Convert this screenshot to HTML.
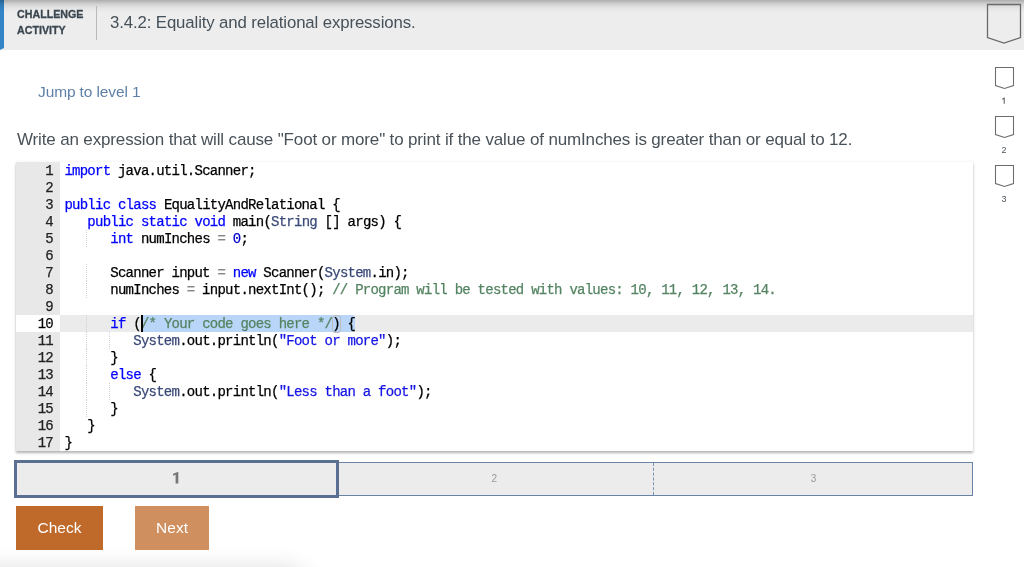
<!DOCTYPE html>
<html><head><meta charset="utf-8">
<style>
*{margin:0;padding:0;box-sizing:border-box}
html,body{width:1024px;height:567px;overflow:hidden;background:#fff;font-family:"Liberation Sans",sans-serif}
.abs{position:absolute}
#hdr{left:0;top:0;width:1024px;height:50px;background:#ededed}
#hdrshadow{left:0;top:0;width:1024px;height:13px;background:linear-gradient(rgba(0,0,0,0.27),rgba(0,0,0,0.11) 33%,rgba(0,0,0,0.03) 66%,rgba(0,0,0,0))}
#bluebar{left:0;top:0;width:4px;height:50px;background:#3485c8;clip-path:polygon(0 0,100% 0,100% 48px,0 50px)}
#chal{left:17px;top:5.5px;font-weight:bold;font-size:10.7px;line-height:16px;color:#3b4750;-webkit-text-stroke:0.3px #3b4750}
#divider{left:95.5px;top:6px;width:1.3px;height:34px;background:#b9b9b9}
#title{left:110px;top:13px;font-size:16.8px;letter-spacing:-0.12px;line-height:20px;color:#46515a;white-space:nowrap}
#jump{left:38px;top:83px;font-size:15.5px;letter-spacing:-0.12px;line-height:18px;color:#5e7fa8;white-space:nowrap}
#prob{left:17px;top:130px;font-size:17px;letter-spacing:-0.15px;line-height:20px;color:#4a5259;white-space:nowrap}
#editor{left:16px;top:162px;width:957px;height:289px;background:#fff;box-shadow:0 1.5px 2.5px rgba(0,0,0,0.3),0 -1px 3px rgba(0,0,0,0.04)}
#gutter{left:0;top:0;width:44px;height:289px;background:#e8e8e8}
.ln{position:absolute;left:0;width:37px;text-align:right;font-family:"Liberation Mono",monospace;font-size:14px;letter-spacing:-0.75px;line-height:17px;color:#222;margin-top:1px;-webkit-text-stroke:0.25px #222}
.cl{position:absolute;left:48.4px;font-family:"Liberation Mono",monospace;font-size:14px;letter-spacing:-0.75px;line-height:17px;color:#000;white-space:pre;margin-top:1px;-webkit-text-stroke:0.25px}
.k{color:#0000ff}.t{color:#3b4a78}.s{color:#1515e6}.c{color:#548462}.n{color:#0000cd}.o{color:#888}
#act{left:44px;top:153px;width:913px;height:17px;background:#ebebeb}
#actg{left:0;top:153px;width:44px;height:17px;background:#fff}
#sel{left:127px;top:153px;width:212px;height:17px;background:#b9d5f8;border-radius:0 3px 3px 0}
#cursor{left:125px;top:153px;width:2px;height:17px;background:#000}
#brk{left:315.5px;top:152.5px;width:9px;height:18px;border:1px solid #bdbdbd;border-radius:3px}
.guide{position:absolute;width:1px;border-left:1px dotted #d2d2d2}
#prog{left:14px;top:462px;width:959px;height:34px;background:#ececec;border:1px solid #6a84a6}
#lvl1{left:14px;top:460px;width:325px;height:38px;border:3px solid #5a6f91;background:#ececec}
#dash{left:653px;top:463px;height:32px;border-left:1px dashed #7a93b3}
#l1{left:170px;top:470px;font-size:13px;font-weight:bold;color:#6d6d6d}
#l2{left:491.6px;top:473px;font-size:10px;color:#9a9a9a}
#l3{left:810.7px;top:473px;font-size:10px;color:#9a9a9a}
.btn{position:absolute;top:506px;height:44px;color:#fff;font-size:15.5px;line-height:44px;text-align:center}
#check{left:16px;width:87px;background:#bf6a2b}
#next{left:135px;width:74px;background:#d08f5e}
#botshadow{left:-40px;top:573px;width:345px;height:40px;border-radius:20px;background:#ddd;box-shadow:0 0 22px 6px rgba(0,0,0,0.13)}
.badge{position:absolute}
.blab{position:absolute;width:20px;text-align:center;font-size:9px;color:#4c555c}
</style></head><body><div id="root" style="position:absolute;left:0;top:0;width:1024px;height:567px;will-change:transform">
<div id="hdr" class="abs"></div>
<div id="bluebar" class="abs"></div>
<div id="hdrshadow" class="abs"></div>
<div id="chal" class="abs">CHALLENGE<br>ACTIVITY</div>
<div id="divider" class="abs"></div>
<div id="title" class="abs">3.4.2: Equality and relational expressions.</div>
<svg class="abs" style="left:0;top:0" width="1024" height="210">
<path d="M987.5 4.5 H1020.5 V37.5 L1004 43 L987.5 37.5 Z" fill="none" stroke="#6a6a6a" stroke-width="1.3"/>
<path d="M995.5 67.5 H1013.5 V85.5 L1004.5 88.5 L995.5 85.5 Z" fill="none" stroke="#6c6c6c" stroke-width="1.05"/>
<path d="M995.5 116.5 H1013.5 V134.5 L1004.5 137.5 L995.5 134.5 Z" fill="none" stroke="#6c6c6c" stroke-width="1.05"/>
<path d="M995.5 165.5 H1013.5 V183.5 L1004.5 186.5 L995.5 183.5 Z" fill="none" stroke="#6c6c6c" stroke-width="1.05"/>
</svg>
<svg class="abs" style="left:990px;top:90px" width="30" height="20"><path d="M13.7 13.8 V9.1 L12.2 9.7 V8.8 L14.1 7.6 H14.7 V13.8 Z" fill="#555"/></svg>
<div class="blab" style="left:994px;top:145px">2</div>
<div class="blab" style="left:994px;top:194px">3</div>

<div id="jump" class="abs">Jump to level 1</div>
<div id="prob" class="abs">Write an expression that will cause "Foot or more" to print if the value of numInches is greater than or equal to 12.</div>

<div id="editor" class="abs">
 <div id="gutter" class="abs"></div>
 <div id="act" class="abs"></div>
 <div id="actg" class="abs"></div>
 <div id="sel" class="abs"></div>
 <div id="brk" class="abs"></div>
 <div class="guide" style="left:70px;top:68px;height:17px"></div>
 <div class="guide" style="left:70px;top:102px;height:17px"></div>
 <div class="guide" style="left:70px;top:119px;height:17px"></div>
 <div class="guide" style="left:70px;top:153px;height:17px"></div>
 <div class="guide" style="left:70px;top:170px;height:17px"></div>
 <div class="guide" style="left:70px;top:187px;height:17px"></div>
 <div class="guide" style="left:70px;top:204px;height:17px"></div>
 <div class="guide" style="left:70px;top:221px;height:17px"></div>
 <div class="guide" style="left:70px;top:238px;height:17px"></div>
 <div class="guide" style="left:93px;top:170px;height:17px"></div>
 <div class="guide" style="left:93px;top:221px;height:17px"></div>
 <div class="ln" style="top:0">1</div>
 <div class="ln" style="top:17px">2</div>
 <div class="ln" style="top:34px">3</div>
 <div class="ln" style="top:51px">4</div>
 <div class="ln" style="top:68px">5</div>
 <div class="ln" style="top:85px">6</div>
 <div class="ln" style="top:102px">7</div>
 <div class="ln" style="top:119px">8</div>
 <div class="ln" style="top:136px">9</div>
 <div class="ln" style="top:153px;color:#000">10</div>
 <div class="ln" style="top:170px">11</div>
 <div class="ln" style="top:187px">12</div>
 <div class="ln" style="top:204px">13</div>
 <div class="ln" style="top:221px">14</div>
 <div class="ln" style="top:238px">15</div>
 <div class="ln" style="top:255px">16</div>
 <div class="ln" style="top:272px">17</div>
 <div class="cl" style="top:0"><span class="k">import</span> java.util.Scanner;</div>
 <div class="cl" style="top:34px"><span class="k">public</span> <span class="k">class</span> EqualityAndRelational {</div>
 <div class="cl" style="top:51px">   <span class="k">public</span> <span class="k">static</span> <span class="k">void</span> main(<span class="t">String</span> [] args) {</div>
 <div class="cl" style="top:68px">      <span class="k">int</span> numInches <span class="o">=</span> <span class="n">0</span>;</div>
 <div class="cl" style="top:102px">      Scanner input <span class="o">=</span> <span class="k">new</span> Scanner(<span class="t">System</span>.in);</div>
 <div class="cl" style="top:119px">      numInches <span class="o">=</span> input.nextInt(); <span class="c">// Program will be tested with values: 10, 11, 12, 13, 14.</span></div>
 <div class="cl" style="top:153px">      <span class="k">if</span> (<span class="c">/* Your code goes here */</span>) {</div>
 <div class="cl" style="top:170px">         <span class="t">System</span>.out.println(<span class="s">"Foot or more"</span>);</div>
 <div class="cl" style="top:187px">      }</div>
 <div class="cl" style="top:204px">      <span class="k">else</span> {</div>
 <div class="cl" style="top:221px">         <span class="t">System</span>.out.println(<span class="s">"Less than a foot"</span>);</div>
 <div class="cl" style="top:238px">      }</div>
 <div class="cl" style="top:255px">   }</div>
 <div class="cl" style="top:272px">}</div>
 <div id="cursor" class="abs"></div>
</div>

<div id="prog" class="abs"></div>
<div id="dash" class="abs"></div>
<div id="lvl1" class="abs"></div>
<svg class="abs" style="left:0;top:0" width="1024" height="567"><path d="M175.6 483.5 V474.7 L173.1 475.7 V473.7 L177.6 471.9 H178.3 V483.5 Z" fill="#777"/></svg>
<div id="l2" class="abs">2</div>
<div id="l3" class="abs">3</div>
<div id="botshadow" class="abs"></div>
<div id="check" class="btn">Check</div>
<div id="next" class="btn">Next</div>
</div></body></html>
